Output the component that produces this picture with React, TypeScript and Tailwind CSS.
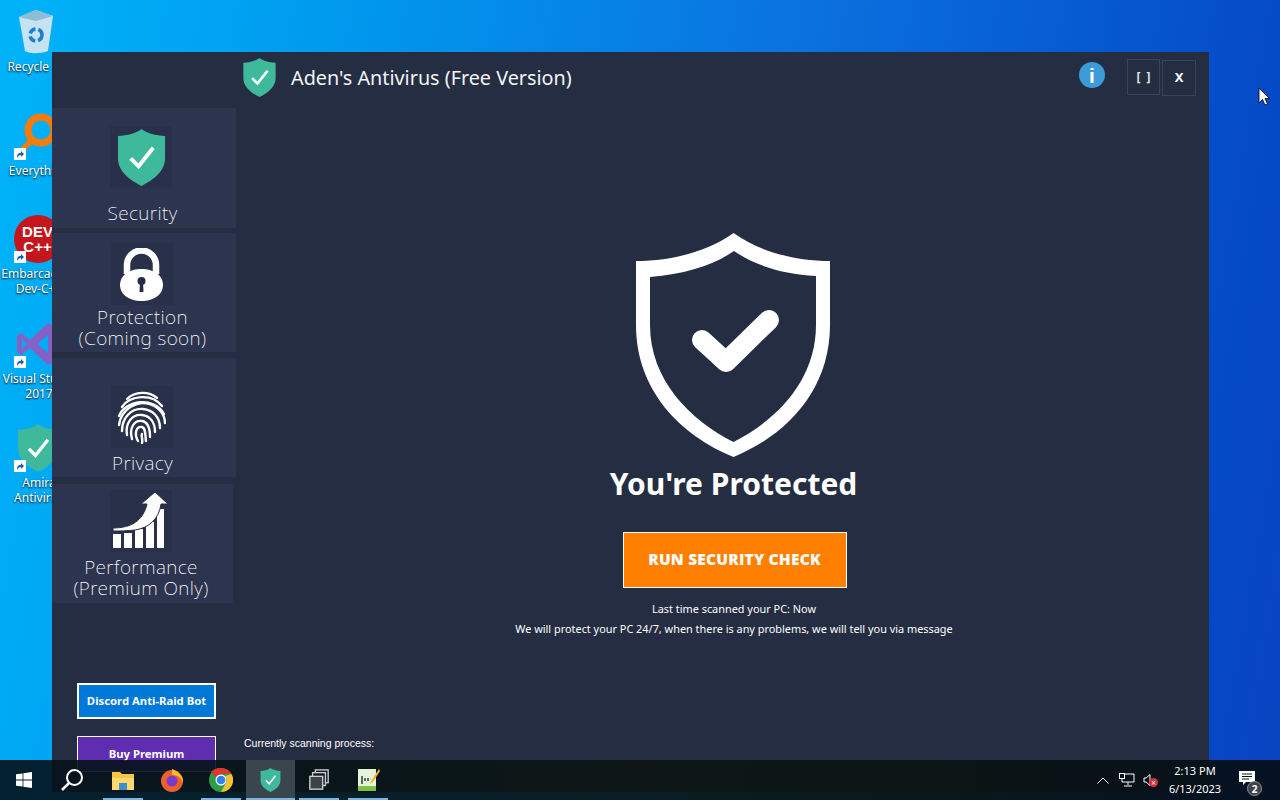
const sans = 'font-["Noto_Sans","Open_Sans",sans-serif]';

function TealShield({ className }: { className?: string }) {
  return (
    <svg viewBox="0 0 50 58" className={className}>
      <path d="M25 0C20 4 10 7 1 7V30C1 43 13 52 25 58C37 52 49 43 49 30V7C40 7 30 4 25 0Z" fill="#3fb99b" />
      <path d="M14 30L22 38L37 19" fill="none" stroke="#fff" strokeWidth="4" />
    </svg>
  );
}

function BigShield() {
  return (
    <svg viewBox="0 0 194 224" className="w-[194px] h-[224px] -translate-x-[1px]">
      <path
        fillRule="evenodd"
        fill="#fff"
        d="M97.5 0C74 17 39 28 0 28V92C0 157 44 202 97.5 224C151 202 194 157 194 92V28C156 28 121 17 97.5 0ZM98 18C76 33 49 41 14 44V92C14 147 54 187 97.5 209C141 187 180 147 180 92V43C147 41 120 33 98 18Z"
      />
      <path d="M66 107L90 129L133 87" fill="none" stroke="#fff" strokeWidth="20" strokeLinecap="round" strokeLinejoin="round" />
    </svg>
  );
}

function LockIcon() {
  return (
    <svg viewBox="0 0 43 53" className="w-[43px] h-[53px]">
      <path d="M7 26V17a14.5 14.5 0 0 1 29 0V26" fill="none" stroke="#fff" strokeWidth="6.5" />
      <path d="M21.5 21C33 21 43 27 43 37C43 47 33 53 21.5 53C10 53 0 47 0 37C0 27 10 21 21.5 21Z" fill="#fff" />
      <circle cx="21.5" cy="33" r="4" fill="#252d42" />
      <path d="M20 34H23L23.5 44H19.5Z" fill="#252d42" />
    </svg>
  );
}

function FingerprintIcon() {
  return (
    <svg viewBox="0 0 48 54" className="w-[48px] h-[54px]" fill="none" stroke="#fff" strokeWidth="2.4" strokeLinecap="round">
      <path d="M9 9C17 1 31 1 39 8" />
      <path d="M4 17C12 5 34 3 44 16" />
      <path d="M1 26C7 10 36 6 46 24" />
      <path d="M1 35C3 19 19 10 32 14C41 17 47 25 47 33" />
      <path d="M4 41C4 28 13 18 25 19C35 20 42 27 42 38" />
      <path d="M9 45C7 33 14 24 24 25C32 26 37 32 37 42" />
      <path d="M14 49C11 38 16 30 24 31C30 32 32 38 32 47" />
      <path d="M20 51C16 44 18 36 24 37C28 38 27 45 28 51" />
      <path d="M24 44C23 47 25 49 24 53" />
    </svg>
  );
}

function PerformanceIcon() {
  return (
    <svg viewBox="0 0 60 60" className="w-[60px] h-[60px]" fill="#fff">
      <path d="M2 43H10V57H2ZM13 42H21V57H13ZM24 38H32V57H24ZM35 31H43V57H35ZM46 18H53V57H46Z" />
      <path d="M2 37C20 37 32 30 36 13H30L44 1L57 13H50C48 28 38 37 24 39C16 40 8 40 2 40Z" stroke="#252d42" strokeWidth="1" />
    </svg>
  );
}

function NavCard({ icon, label, className, iconClass }: { icon: React.ReactNode; label: string[]; className: string; iconClass: string }) {
  return (
    <div className={`rounded-[2px] bg-[#2c3450] flex flex-col items-center ${className}`}>
      <div className={`w-[62px] h-[62px] bg-[#293049] flex items-center justify-center ${iconClass}`}>{icon}</div>
      <div className="mt-auto mb-[3px] mr-[3px] text-center text-white font-extralight text-[19px] leading-[21px] tracking-[0.4px] font-['Noto_Sans',sans-serif]">
        {label.map((l) => (
          <div key={l}>{l}</div>
        ))}
      </div>
    </div>
  );
}

function DesktopIcon({ className, lines, icon, shortcut = true }: { className: string; lines: string[]; icon: React.ReactNode; shortcut?: boolean }) {
  return (
    <div className={`absolute left-0 w-[75px] flex flex-col items-center ${className}`}>
      <div className="relative w-[48px] h-[48px]">
        {icon}
        {shortcut && (
          <div className="absolute left-[0px] bottom-[0px] w-[12px] h-[12px] bg-white flex items-center justify-center">
            <svg viewBox="0 0 10 10" className="w-[10px] h-[10px]">
              <path d="M2 9C2 5 3 4 6 4V2L9 5L6 8V6C4 6 3 7 2 9Z" fill="#1d5fa8" />
            </svg>
          </div>
        )}
      </div>
      <div className="mt-[3px] ml-[3px] text-center text-white text-[12px] leading-[15px] font-['Noto_Sans',sans-serif] [text-shadow:0_1px_2px_#000]">
        {lines.map((l) => (
          <div key={l} className="whitespace-nowrap">{l}</div>
        ))}
      </div>
    </div>
  );
}

function Desktop() {
  return (
    <>
      <DesktopIcon
        className="top-[8px]"
        lines={['Recycle Bin']}
        shortcut={false}
        icon={
          <svg viewBox="0 0 48 48" className="w-[48px] h-[48px] -translate-x-[2px]">
            <path d="M7 9L24 2L41 8L36 43C28 46 18 46 13 43Z" fill="#c5e3f2" />
            <path d="M7 9L24 2L41 8L24 13Z" fill="#8fbcd6" />
            <circle cx="24" cy="27" r="6" fill="none" stroke="#1f7fcf" strokeWidth="3.5" strokeDasharray="7 3" />
          </svg>
        }
      />
      <DesktopIcon
        className="top-[112px]"
        lines={['Everything']}
        icon={
          <svg viewBox="0 0 48 48" className="w-[48px] h-[48px]">
            <circle cx="27" cy="18" r="13" fill="none" stroke="#f57c0a" strokeWidth="7" />
            <path d="M17 29L9 37" stroke="#f57c0a" strokeWidth="6" />
          </svg>
        }
      />
      <DesktopIcon
        className="top-[215px]"
        lines={['Embarcadero', 'Dev-C++']}
        icon={
          <div className="w-[48px] h-[48px] rounded-full bg-[#c4161c] flex flex-col items-center justify-center text-white font-bold text-[15px] leading-[15px] font-['Liberation_Sans',sans-serif]">
            <div>DEV</div>
            <div>C++</div>
          </div>
        }
      />
      <DesktopIcon
        className="top-[320px]"
        lines={['Visual Studio', '2017']}
        icon={
          <svg viewBox="0 0 48 48" className="w-[48px] h-[48px]">
            <path d="M34 3L44 8V40L34 45L16 28L7 35L3 32V16L7 13L16 20ZM34 15L23 24L34 33ZM8 19V29L13 24Z" fill="#8661c5" />
          </svg>
        }
      />
      <DesktopIcon className="top-[424px]" lines={['Amira', 'Antivirus']} icon={<TealShield className="w-[48px] h-[48px]" />} />
    </>
  );
}

function AppWindow() {
  return (
    <div className="absolute left-[52px] top-[52px] w-[1157px] h-[740px] bg-[#252d42] flex flex-col text-white font-['Noto_Sans',sans-serif]">
      <header className="h-[56px] shrink-0 flex items-center pl-[190px] pr-[13px] pb-[5px]">
        <TealShield className="w-[35px] h-[39px]" />
        <div className="ml-[14px] text-[19.8px] text-[#f2f4f8]">Aden's Antivirus (Free Version)</div>
        <div className="ml-auto w-[26px] h-[26px] mb-[5px] rounded-full bg-[#3d9bd8] flex items-center justify-center font-bold text-[21px] leading-none font-['Liberation_Sans',sans-serif]">
          i
        </div>
        <button className="ml-[22px] w-[33px] h-[36px] mb-[2px] border border-[#3c4356] text-[12px] font-bold text-[#e8e8e8] whitespace-pre">[  ]</button>
        <button className="ml-[2px] w-[34px] h-[36px] border border-[#3c4356] text-[13px] font-bold">X</button>
      </header>
      <div className="flex-1 flex min-h-0">
        <aside className="w-[184px] shrink-0 flex flex-col">
          <NavCard className="h-[120px] pt-[18px] pb-[1px]" iconClass="mr-[6px]" icon={<TealShield className="w-[49px] h-[57px]" />} label={['Security']} />
          <NavCard className="h-[119px] mt-[5px] pt-[10px]" iconClass="mr-[5px]" icon={<LockIcon />} label={['Protection', '(Coming soon)']} />
          <NavCard className="h-[119px] mt-[6px] pt-[28px]" iconClass="mr-[5px]" icon={<FingerprintIcon />} label={['Privacy']} />
          <NavCard className="h-[119px] mt-[7px] w-[181px] pt-[6px] pb-[1px]" iconClass="mr-[3px]" icon={<PerformanceIcon />} label={['Performance', '(Premium Only)']} />
          <div className="mt-[80px] ml-[25px] w-[139px] h-[36px] border-2 border-white bg-[#0078d7] flex items-center justify-center text-[11.3px] font-bold">
            Discord Anti-Raid Bot
          </div>
          <div className="mt-[17px] ml-[25px] w-[139px] h-[36px] border border-white bg-[#5f2eb0] flex items-center justify-center text-[11.3px] font-bold">
            Buy Premium
          </div>
        </aside>
        <main className="flex-1 flex flex-col min-w-0">
          <div className="flex-1 flex flex-col items-center pl-[22px] pt-[125px]">
            <BigShield />
            <div className="mt-[6px] text-[30px] leading-[42px] font-bold">You're Protected</div>
            <button className="mt-[27px] ml-[2px] w-[224px] h-[56px] bg-[#ff8000] border border-white text-[15.5px] font-extrabold tracking-[0.2px] font-['Open_Sans',sans-serif]">
              RUN SECURITY CHECK
            </button>
            <div className="mt-[11px] ml-[1px] text-[10.9px] leading-[20px] text-center">
              <div>Last time scanned your PC: Now</div>
              <div>We will protect your PC 24/7, when there is any problems, we will tell you via message</div>
            </div>
          </div>
          <div className="pl-[8px] pb-[41px] text-[10.5px] leading-[16px] font-['Liberation_Sans',sans-serif]">Currently scanning process:</div>
        </main>
      </div>
    </div>
  );
}

function TaskItem({ children, active, on = true, className = '' }: { children: React.ReactNode; active?: boolean; on?: boolean; className?: string }) {
  return (
    <div className={`relative w-[49px] h-full flex items-center justify-center ${active ? 'bg-[#3a464e]' : ''} ${className}`}>
      {children}
      {on && <div className={`absolute bottom-0 h-[2px] bg-[#7fb4dc] ${active ? 'left-0 right-0' : 'left-[5px] right-[4px]'}`} />}
    </div>
  );
}

function Taskbar() {
  return (
    <div className="absolute left-0 right-0 bottom-0 h-[40px] bg-[linear-gradient(90deg,#04121ce6,#0a1410e6_50%,#0a1410f0_70%,#040e18f0)] flex items-stretch text-white font-['Noto_Sans',sans-serif]">
      <div className="w-[48px] flex items-center justify-center">
        <svg viewBox="0 0 16 16" className="w-[16px] h-[16px]" fill="#fff">
          <path d="M0 2.3L6.6 1.4V7.6H0ZM7.4 1.3L16 0V7.6H7.4ZM0 8.4H6.6V14.6L0 13.7ZM7.4 8.4H16V16L7.4 14.7Z" />
        </svg>
      </div>
      <div className="w-[48px] flex items-center justify-center">
        <svg viewBox="0 0 24 24" className="w-[24px] h-[24px]" fill="none" stroke="#fff" strokeWidth="2">
          <circle cx="14.5" cy="9.5" r="7.5" />
          <path d="M9 15L2 22" strokeWidth="2.5" />
        </svg>
      </div>
      <TaskItem className="ml-[2px]">
        <svg viewBox="0 0 24 24" className="w-[24px] h-[24px]">
          <path d="M1 4H9L11 6H23V22H1Z" fill="#f5c54a" />
          <path d="M1 10H23V22H1Z" fill="#fbd96e" />
          <path d="M8 15H16V22H8Z" fill="#3c8fd0" />
        </svg>
      </TaskItem>
      <TaskItem on={false}>
        <svg viewBox="0 0 24 24" className="w-[24px] h-[24px]">
          <circle cx="12" cy="13" r="11" fill="#f0612a" />
          <path d="M12 1C20 4 24 10 23 15C21 9 17 7 12 7Z" fill="#ffbd2e" />
          <circle cx="12" cy="13" r="5.5" fill="#7a3bc8" />
        </svg>
      </TaskItem>
      <TaskItem>
        <svg viewBox="0 0 24 24" className="w-[24px] h-[24px]">
          <circle cx="12" cy="12" r="12" fill="#2a9d47" />
          <path d="M12 0A12 12 0 0 1 22.4 6H12A6 6 0 0 0 6.6 9.5L2 4A12 12 0 0 1 12 0Z" fill="#e0352b" />
          <path d="M22.4 6A12 12 0 0 1 12 24L17 15A6 6 0 0 0 16 8Z" fill="#fbc02d" />
          <circle cx="12" cy="12" r="5.5" fill="#fff" />
          <circle cx="12" cy="12" r="4.3" fill="#2f80ed" />
        </svg>
      </TaskItem>
      <TaskItem active className="ml-[1px]">
        <TealShield className="w-[21px] h-[24px]" />
      </TaskItem>
      <TaskItem className="ml-[-1px]">
        <svg viewBox="0 0 24 24" className="w-[22px] h-[22px]" fill="#0e171d" stroke="#c9cdd0" strokeWidth="1.5">
          <rect x="8" y="1" width="14" height="14" />
          <rect x="5" y="4" width="14" height="14" />
          <rect x="2" y="8" width="14" height="14" fill="#3b4347" />
        </svg>
      </TaskItem>
      <TaskItem>
        <svg viewBox="0 0 24 24" className="w-[24px] h-[24px]">
          <path d="M2 1H20V23H2Z" fill="#e8f3d8" />
          <path d="M2 18H20V23H2Z" fill="#7cc243" />
          <path d="M6 8V16M9 10V13M12 10V13" stroke="#244" strokeWidth="1.5" />
          <path d="M23 1L15 13L14 16L17 14L24 3Z" fill="#e8b93a" />
        </svg>
      </TaskItem>
      <div className="ml-auto flex items-center">
        <svg viewBox="0 0 12 7" className="w-[12px] h-[7px] mr-[10px]" fill="none" stroke="#fff" strokeWidth="1">
          <path d="M0.5 6.5L6 1L11.5 6.5" />
        </svg>
        <svg viewBox="0 0 16 14" className="w-[16px] h-[14px] mr-[8px]" fill="none" stroke="#fff" strokeWidth="1">
          <path d="M3 1H15V9H3ZM9 9V12M5 13H13" />
          <rect x="0.5" y="0.5" width="5" height="5" fill="#0b1419" />
        </svg>
        <div className="relative w-[14px] h-[14px] mr-[6px]">
          <svg viewBox="0 0 10 14" className="w-[10px] h-[14px]" fill="none" stroke="#fff" strokeWidth="1">
            <path d="M1 5H3L7 1.5V12.5L3 9H1Z" />
          </svg>
          <div className="absolute left-[6px] top-[5px] w-[9px] h-[9px] rounded-full bg-[#d8303c] flex items-center justify-center text-[8px] leading-none">×</div>
        </div>
        <div className="w-[64px] text-center text-[11px] leading-[18px] mr-[3px]">
          <div>2:13 PM</div>
          <div>6/13/2023</div>
        </div>
        <div className="relative w-[38px] h-full flex items-center justify-center mr-[12px]">
          <svg viewBox="0 0 16 15" className="w-[16px] h-[15px] -translate-x-[2px] -translate-y-[2px]" fill="#fff">
            <path d="M0 0H16V11H7L4 14V11H0Z" />
            <path d="M3 3H13M3 5.5H13M3 8H10" stroke="#0b1419" />
          </svg>
          <div className="absolute right-[6px] bottom-[4px] w-[15px] h-[15px] rounded-full bg-[#3c4347] border border-[#8b9195] flex items-center justify-center text-[10px] font-bold leading-none">2</div>
        </div>
      </div>
    </div>
  );
}

export default function App() {
  return (
    <div className={`relative w-[1280px] h-[800px] overflow-hidden bg-[linear-gradient(100deg,#00b4f8_0%,#0098ee_25%,#0a74e0_55%,#0448c6_92%,#0a44c0_100%)] ${sans}`}>
      <Desktop />
      <AppWindow />
      <Taskbar />
      <svg viewBox="0 0 12 19" className="absolute left-[1258px] top-[87px] w-[12px] h-[19px]">
        <path d="M1 1V16L4.5 12.5L7 18L9.5 17L7 11.5H11.5Z" fill="#fff" stroke="#000" strokeWidth="0.8" />
      </svg>
    </div>
  );
}
